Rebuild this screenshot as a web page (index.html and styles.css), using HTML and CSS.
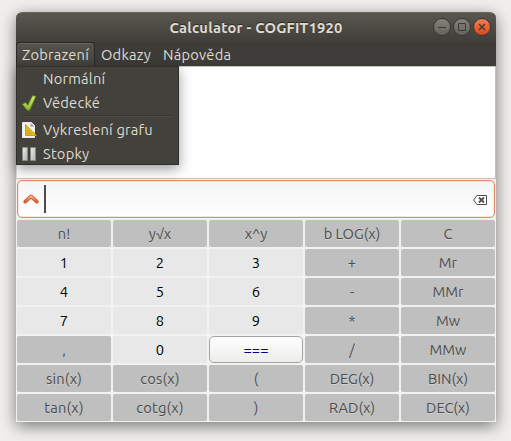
FILE: index.html
```html
<!DOCTYPE html>
<html lang="cs">
<head>
<meta charset="utf-8">
<title>Calculator - COGFIT1920</title>
<link rel="stylesheet" href="styles.css">
</head>
<body>
<main class="window">
  <header class="titlebar">
    <h1 class="title">Calculator - COGFIT1920</h1>
    <div class="controls">
      <svg class="control" viewBox="0 0 16 16"><path d="M4 8.5h8"/></svg>
      <svg class="control" viewBox="0 0 16 16"><path d="M4.5 4.5h7v7h-7z"/></svg>
      <svg class="control close" viewBox="0 0 16 16"><path d="M5 5l6 6M11 5l-6 6"/></svg>
    </div>
  </header>
  <nav class="menubar">
    <div class="menu open"><span>Zobrazení</span>
      <div class="popup">
        <div class="item"><span class="icon"></span><span>Normální</span></div>
        <div class="item">
          <svg class="icon" viewBox="0 0 16 16"><defs><linearGradient id="chk" x2="0" y2="1"><stop stop-color="#d4ed78"/><stop offset="1" stop-color="#8db331"/></linearGradient></defs><path d="M.4 9.4l3-1.9 2.4 2.7L10.5.7l3.4.5L7.8 14.9l-2.4.5z" fill="url(#chk)" stroke="#5d8614" stroke-width=".8"/></svg>
          <span>Vědecké</span></div>
        <hr class="separator">
        <div class="item">
          <svg class="icon" viewBox="0 0 16 16"><path d="M.5.5h9l3 3v12H.5z" fill="#f4f4f1" stroke="#e8e8e4"/><path d="M8.5 1v3.5h4z" fill="#999"/><path d="M3.5 2.5v11h10.8z" fill="#e3bd20" stroke="#c99f00"/><path d="M5.8 8.3v3h3z" fill="#f8edb0" stroke="#a88400" stroke-width=".8"/></svg>
          <span>Vykreslení grafu</span></div>
        <div class="item">
          <svg class="icon" viewBox="0 0 16 16"><defs><linearGradient id="pau" x2="1" y2="1"><stop stop-color="#e8e8e6"/><stop offset="1" stop-color="#b5b8b4"/></linearGradient></defs><path d="M.5 1.5h5v13h-5zM8.5 1.5h5v13h-5z" fill="#ccc" stroke="#888a85"/><path d="M1 2h4v12H1z" fill="url(#pau)"/><path d="M9 2h4v12H9z" fill="url(#pau)"/></svg>
          <span>Stopky</span></div>
      </div>
    </div>
    <div class="menu"><span>Odkazy</span></div>
    <div class="menu"><span>Nápověda</span></div>
  </nav>
  <section class="display"></section>
  <section class="entry">
    <svg class="up" viewBox="0 0 16 12"><defs><linearGradient id="arr" x2="0" y2="1"><stop stop-color="#f5c08d"/><stop offset="1" stop-color="#e2612f"/></linearGradient></defs><path d="M2.2 8.7L8 3.4l5.8 5.3" fill="none" stroke="#cf5730" stroke-width="3.6" stroke-linecap="round" stroke-linejoin="round"/><path d="M2.3 8.5L8 3.3l5.7 5.2" fill="none" stroke="url(#arr)" stroke-width="1.8" stroke-linecap="round" stroke-linejoin="round"/></svg>
    <span class="caret"></span>
    <svg class="clear" viewBox="0 0 14 10"><path d="M4 .5h9.5v9H4L.6 5z" fill="#fff" stroke="#4c4c4c"/><path d="M6 2.5l5 5M11 2.5l-5 5" stroke="#4c4c4c" stroke-width="1.8"/></svg>
  </section>
  <section class="keys">
    <button>n!</button><button>y√x</button><button>x^y</button><button>b LOG(x)</button><button>C</button>
    <button class="digit">1</button><button class="digit">2</button><button class="digit">3</button><button>+</button><button>Mr</button>
    <button class="digit">4</button><button class="digit">5</button><button class="digit">6</button><button>-</button><button>MMr</button>
    <button class="digit">7</button><button class="digit">8</button><button class="digit">9</button><button>*</button><button>Mw</button>
    <button>,</button><button class="digit">0</button><button class="equals">===</button><button>/</button><button>MMw</button>
    <button class="wide">sin(x)</button><button class="wide">cos(x)</button><button>(</button><button>DEG(x)</button><button>BIN(x)</button>
    <button class="wide">tan(x)</button><button class="wide">cotg(x)</button><button>)</button><button>RAD(x)</button><button>DEC(x)</button>
  </section>
</main>
</body>
</html>
```
FILE: styles.css
```css
* { box-sizing: border-box; }
body {
  margin: 0;
  padding: 12px 15px 19px 16px;
  height: 441px;
  overflow: hidden;
  background: #f0efee;
  font-family: Ubuntu, "Noto Sans", sans-serif;
  font-size: 14.67px;
}
.window {
  width: 480px;
  height: 410px;
  display: flex;
  flex-direction: column;
  background: #f2f1f0;
  border-radius: 6px 6px 0 0;
  box-shadow: 0 4px 16px rgba(0, 0, 0, .5);
}
.titlebar {
  position: relative;
  height: 30px;
  display: flex;
  align-items: center;
  justify-content: center;
  border-radius: 6px 6px 0 0;
  border-top: 1px solid #66645b;
  background: linear-gradient(#59574e, #3f3e39);
}
.title {
  margin: 0;
  font-size: 14.67px;
  line-height: 20px;
  color: #dfdbd2;
  letter-spacing: .22px;
  text-shadow: 0 -1px #2c2b27;
}
.controls { position: absolute; right: 5px; top: 5px; display: flex; gap: 2px; }
.control {
  width: 18px;
  height: 18px;
  border: 1px solid #383732;
  border-radius: 50%;
  background: linear-gradient(#85837c, #62615a);
  fill: none;
  stroke: #3b3a35;
}
.close { background: linear-gradient(#f47d55, #dc471b); stroke-width: 1.4; }
.menubar {
  height: 24px;
  display: flex;
  background: #3d3c38;
  color: #dfdbd2;
  line-height: 26px;
  white-space: nowrap;
  letter-spacing: .22px;
}
.menu { padding: 0 6px; }
.menu.open {
  position: relative;
  width: 79px;
  border: 1px solid #292824;
  border-bottom: 0;
  border-radius: 4px 4px 0 0;
  background: linear-gradient(#55534b, #42413b);
  box-shadow: inset 0 1px #68665d;
  padding: 0 5px;
  line-height: 24px;
}
.popup {
  position: absolute;
  z-index: 2;
  left: -1px;
  top: 23px;
  width: 163px;
  height: 99px;
  padding: 0 5px;
  border: 1px solid #302f2b;
  background: #42413b;
  box-shadow: 0 4px 12px rgba(0, 0, 0, .4);
}
.item { display: flex; align-items: center; height: 24px; gap: 5px; line-height: 24px; }
.icon { width: 16px; height: 16px; flex: none; }
.separator { height: 2px; margin: 0 0 1px; border: 0; border-top: 1px solid #373631; background: #4b4a44; }
.display { height: 113px; border: 1px solid #c5c0ba; border-right-color: #c5c0ba; border-left-color: #dedbd7; background: #fff; }
.entry {
  height: 38px;
  margin: 1px 1px 2px;
  display: flex;
  align-items: center;
  padding: 0 7px 0 5px;
  border: 1px solid #e38b66;
  border-radius: 5px;
  background: linear-gradient(#f4f4f4, #fff);
  box-shadow: inset 0 0 0 1px #f8e4da;
}
.up { width: 16px; height: 12px; }
.caret { width: 2px; height: 28px; margin-left: 5px; background: #4c4c4c; }
.clear { width: 14px; height: 10px; margin-left: auto; margin-top: 2px; }
.keys {
  display: grid;
  grid-template-columns: repeat(5, 94px);
  grid-auto-rows: 27px;
  gap: 2px;
  padding: 0 1px;
}
.keys button {
  margin: 0;
  padding: 0;
  border: 0;
  border-radius: 2px;
  background: #bfbfbf;
  color: #4c4c4c;
  font: 14.67px/27px Ubuntu, "Noto Sans", sans-serif;
  text-shadow: 0 1px rgba(255, 255, 255, .3);
}
.keys .wide { letter-spacing: .2px; }
.keys .digit { background: #e8e8e8; color: #000; }
.keys .equals {
  border: 1px solid #a5a19d;
  border-radius: 5px;
  background: linear-gradient(#fff, #ececeb);
  color: #00008b;
  line-height: 25px;
}
```
